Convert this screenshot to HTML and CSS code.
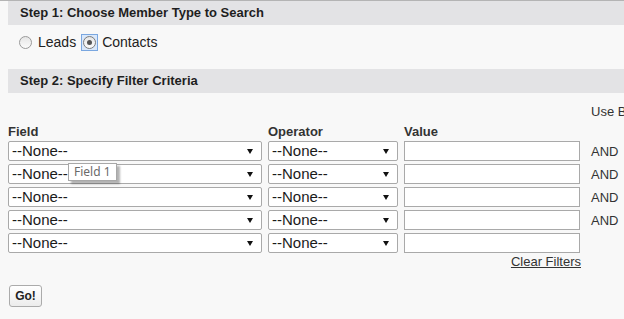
FILE: index.html
```html
<!DOCTYPE html>
<html lang="en">
<head>
    <meta charset="UTF-8">
    <title>Member Search</title>
    <link rel="stylesheet" href="styles.css">
</head>
<body>
    <div class="page">
        <div class="section-head">Step 1: Choose Member Type to Search</div>
        <div class="member-types">
            <label class="radio"><span class="radio-dot"></span>Leads</label>
            <label class="radio checked"><span class="radio-focus"><span class="radio-dot"></span></span>Contacts</label>
        </div>

        <div class="section-head">Step 2: Specify Filter Criteria</div>
        <div class="filters">
            <div class="logic-link">Use Boolean Filter Logic</div>

            <div class="col-label">Field</div>
            <div class="col-label">Operator</div>
            <div class="col-label">Value</div>
            <div></div>

            <div class="select wide"><span>--None--</span></div>
            <div class="select"><span>--None--</span></div>
            <div class="text-input"></div>
            <div class="and">AND</div>

            <div class="select wide"><span>--None--</span></div>
            <div class="select"><span>--None--</span></div>
            <div class="text-input"></div>
            <div class="and">AND</div>

            <div class="select wide"><span>--None--</span></div>
            <div class="select"><span>--None--</span></div>
            <div class="text-input"></div>
            <div class="and">AND</div>

            <div class="select wide"><span>--None--</span></div>
            <div class="select"><span>--None--</span></div>
            <div class="text-input"></div>
            <div class="and">AND</div>

            <div class="select wide"><span>--None--</span></div>
            <div class="select"><span>--None--</span></div>
            <div class="text-input"></div>
            <div></div>

            <div></div>
            <div></div>
            <div class="clear"><a href="#">Clear Filters</a></div>
            <div></div>

            <!-- hover tip on the 2nd field picklist -->
            <div class="tooltip">Field 1</div>
        </div>

        <button class="go-btn">Go!</button>
    </div>
</body>
</html>
```

FILE: styles.css
```css
html, body {
    margin: 0;
    padding: 0;
}

body {
    font-family: "Liberation Sans", Arial, sans-serif;
    font-size: 13px;
    color: #222;
    background-color: #f8f8f8;
    border-top: 1px solid #b4b4b4;
    overflow: hidden;
    height: 318px;
}

.page {
    padding-left: 8px;
}

.section-head {
    height: 24px;
    line-height: 24px;
    padding: 0 12px;
    background-color: #e3e3e5;
    font-weight: bold;
    font-size: 13px;
    color: #1e1e1e;
}

.member-types {
    display: flex;
    align-items: center;
    height: 16px;
    padding: 9px 11px 19px;
}

.radio {
    display: flex;
    align-items: center;
    font-size: 14px;
    color: #222;
    margin-right: 6px;
}

.radio-dot {
    width: 11px;
    height: 11px;
    border: 1px solid #9a9a9a;
    border-radius: 50%;
    background: linear-gradient(#e6e6e6, #fbfbfb);
    margin-right: 6px;
    position: relative;
}

.radio-focus {
    display: flex;
    align-items: center;
    justify-content: center;
    width: 13px;
    height: 13px;
    padding: 1px;
    border: 1px solid #7aa7e0;
    background: #d9e8fb;
    margin-right: 4px;
    margin-left: -1px;
}

.radio-focus .radio-dot {
    margin-right: 0;
    border-color: #7c7c7c;
}

.checked .radio-dot::after {
    content: '';
    position: absolute;
    top: 3px;
    left: 3px;
    width: 5px;
    height: 5px;
    border-radius: 50%;
    background: #555;
}

.filters {
    position: relative;
    display: grid;
    grid-template-columns: 254px 130px 176px auto;
    column-gap: 6px;
    row-gap: 3px;
    padding-top: 12px;
}

.logic-link {
    grid-column: 4;
    line-height: 14px;
    padding-left: 5px;
    padding-bottom: 3px;
    white-space: nowrap;
    color: #333;
}

.col-label {
    font-weight: bold;
    line-height: 13px;
    color: #333;
}

.select {
    position: relative;
    height: 18px;
    line-height: 18px;
    border: 1px solid #a9a9a9;
    border-radius: 2px;
    background: #fff;
    padding-left: 3px;
    font-size: 15px;
    color: #1a1a1a;
}

.select::after {
    content: '';
    position: absolute;
    right: 8px;
    top: 7px;
    border-left: 3.5px solid transparent;
    border-right: 3.5px solid transparent;
    border-top: 5px solid #111;
}

.text-input {
    height: 18px;
    border: 1px solid #a9a9a9;
    background: #fff;
}

.and {
    display: flex;
    align-items: center;
    padding-left: 5px;
    color: #333;
    white-space: nowrap;
}

.clear {
    text-align: right;
    line-height: 15px;
    margin-top: -2px;
    margin-right: -1px;
}

.clear a {
    color: #333;
}

.tooltip {
    position: absolute;
    left: 60px;
    top: 70px;
    height: 16px;
    line-height: 16px;
    padding: 0 5px;
    border: 1px solid #a8a8a8;
    background: #fff;
    box-shadow: 3px 3px 2px rgba(0, 0, 0, 0.3);
    font-family: "Noto Sans", "Open Sans", sans-serif;
    font-size: 12px;
    color: #6a6a6a;
}

.go-btn {
    display: block;
    margin: 16px 0 0 1px;
    width: 33px;
    height: 22px;
    padding: 0;
    border: 1px solid #ababab;
    border-radius: 3px;
    background: linear-gradient(#ffffff, #ececec);
    font-family: "Liberation Sans", Arial, sans-serif;
    font-weight: bold;
    font-size: 12px;
    color: #222;
}
```
